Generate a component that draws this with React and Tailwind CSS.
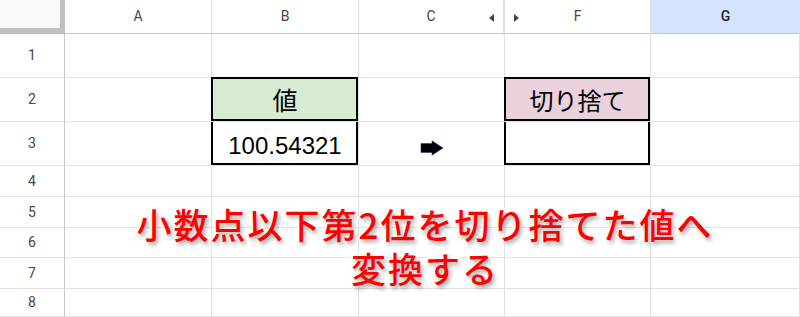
import React from "react"

const rowHeights = [44, 44, 44, 31, 31, 30, 31, 28]
const cols = ["A", "B", "C", "F", "G"]

function Arrow() {
  return (
    <svg width="24" height="16" viewBox="0 0 24 16">
      <path d="M1 3.5 H12 V0.8 L23 8 L12 15.2 V12.5 H1 Z" fill="#000" stroke="#1a3d8f" strokeWidth="0.6" />
    </svg>
  )
}

function Cell({ row, col }) {
  const base = "relative border-r border-b border-[#e1e1e1] flex items-center justify-center"
  const font = { fontFamily: '"Liberation Sans", "Noto Sans CJK JP", sans-serif' }

  if (col === "B" && row === 2) {
    return (
      <div className={`${base} bg-[#d9ead3]`} style={font}>
        <div className="absolute -left-px -top-px right-0 bottom-0 border-2 border-black" />
        <span className="text-[25px] text-black pt-1">値</span>
      </div>
    )
  }
  if (col === "B" && row === 3) {
    return (
      <div className={base} style={font}>
        <div className="absolute -left-px top-0 right-0 bottom-0 border-x-2 border-b-2 border-black" />
        <span className="text-[24px] text-black pt-1">100.54321</span>
      </div>
    )
  }
  if (col === "F" && row === 2) {
    return (
      <div className={`${base} bg-[#ead1dc]`} style={font}>
        <div className="absolute -left-px -top-px right-0 bottom-0 border-2 border-black" />
        <span className="text-[24px] text-black pt-1">切り捨て</span>
      </div>
    )
  }
  if (col === "F" && row === 3) {
    return (
      <div className={`${base} bg-white`}>
        <div className="absolute -left-px top-0 right-0 bottom-0 border-x-2 border-b-2 border-black" />
      </div>
    )
  }
  if (col === "C" && row === 3) {
    return (
      <div className={`${base} pt-2`}>
        <Arrow />
      </div>
    )
  }
  return <div className={base} />
}

export default function App() {
  return (
    <div className="relative w-[800px] h-[317px] overflow-hidden bg-white">
      <div
        className="grid grid-cols-[65px_147px_147px_146px_146px_149px] grid-rows-[34px_44px_44px_44px_31px_31px_30px_31px_28px]"
        style={{ fontFamily: "Roboto, sans-serif" }}
      >
        {/* corner */}
        <div className="relative bg-white border-r border-[#c7c7c7]">
          <div className="absolute left-0 top-0 w-[65px] h-[34px] bg-[#c0c0c0]" />
          <div className="absolute left-0 top-0 w-[60px] h-[28px] bg-[#f8f9fa]" />
        </div>
        {cols.map((c) => (
          <div
            key={c}
            className={`relative flex items-center justify-center border-b border-[#c4c7c5] text-[14px] ${
              c === "G" ? "bg-[#d3e3fd] text-[#1f1f1f] font-medium" : "text-[#444746] border-r border-r-[#e1e1e1]"
            } ${c === "C" ? "border-r-2 border-r-[#d0d0d0]" : ""}`}
          >
            {c}
            {c === "C" && (
              <span className="absolute right-[9px] top-[14px] w-0 h-0 border-y-[4px] border-y-transparent border-r-[5px] border-r-[#444]" />
            )}
            {c === "F" && (
              <span className="absolute left-[9px] top-[14px] w-0 h-0 border-y-[4px] border-y-transparent border-l-[5px] border-l-[#444]" />
            )}
          </div>
        ))}

        {rowHeights.map((h, i) => (
          <React.Fragment key={i}>
            <div className="flex items-center justify-center border-r border-r-[#c7c7c7] border-b border-b-[#e1e1e1] text-[14px] text-[#444746]">
              {i + 1}
            </div>
            {cols.map((c) => (
              <Cell key={c} row={i + 1} col={c} />
            ))}
          </React.Fragment>
        ))}
      </div>

      <div
        className="absolute left-[100px] w-[650px] top-[202px] text-center text-[35px] leading-[44px] tracking-[2px] text-[#ff0000] font-medium [paint-order:stroke_fill] [-webkit-text-stroke:4px_white] [text-shadow:2px_3px_4px_rgba(0,0,0,0.35)]"
        style={{ fontFamily: '"Noto Sans CJK JP", sans-serif' }}
      >
        <div>小数点以下第2位を切り捨てた値へ</div>
        <div>変換する</div>
      </div>
    </div>
  )
}
